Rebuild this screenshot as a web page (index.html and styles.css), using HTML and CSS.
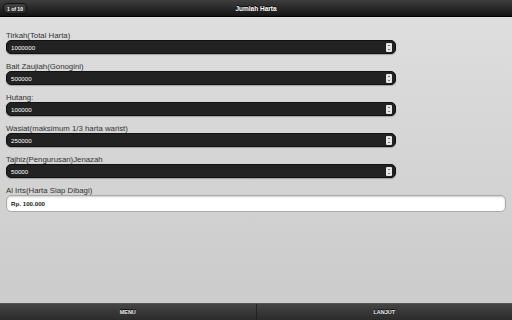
FILE: index.html
```html
<!DOCTYPE html>
<html lang="id">
<head>
  <meta charset="UTF-8" />
  <meta name="viewport" content="width=device-width, initial-scale=1.0"/>
  <title>Jumlah Harta</title>
  <link rel="stylesheet" href="styles.css">
</head>
<body>
  <div class="page">
    <header class="header">
      <span class="page-btn">1 of 10</span>
      <h1>Jumlah Harta</h1>
    </header>

    <main class="content">
      <div class="group">
        <label for="tirkah">Tirkah(Total Harta)</label>
        <div class="field">
          <input type="text" id="tirkah" value="1000000" />
          <span class="spin"></span>
        </div>
      </div>

      <div class="group">
        <label for="bait">Bait Zaujiah(Gonogini)</label>
        <div class="field">
          <input type="text" id="bait" value="500000" />
          <span class="spin"></span>
        </div>
      </div>

      <div class="group">
        <label for="hutang">Hutang:</label>
        <div class="field">
          <input type="text" id="hutang" value="100000" />
          <span class="spin"></span>
        </div>
      </div>

      <div class="group">
        <label for="wasiat">Wasiat(maksimum 1/3 harta warist)</label>
        <div class="field">
          <input type="text" id="wasiat" value="250000" />
          <span class="spin"></span>
        </div>
      </div>

      <div class="group">
        <label for="tajhiz">Tajhiz(Pengurusan)Jenazah</label>
        <div class="field">
          <input type="text" id="tajhiz" value="50000" />
          <span class="spin"></span>
        </div>
      </div>

      <div class="group">
        <label for="irts">Al Irts(Harta Siap Dibagi)</label>
        <input type="text" id="irts" class="result" value="Rp. 100.000" readonly />
      </div>
    </main>

    <footer class="footer">
      <a class="tab">MENU</a>
      <a class="tab">LANJUT</a>
    </footer>
  </div>
</body>
</html>
```

FILE: styles.css
```css
html, body {
  margin: 0;
  padding: 0;
  height: 100%;
}
body {
  font-family: "Liberation Sans", Arial, sans-serif;
  background: linear-gradient(#dfdfdf, #cacaca);
  color: #333;
}
.page {
  display: flex;
  flex-direction: column;
  height: 320px;
}
.header {
  height: 17px;
  box-sizing: border-box;
  background: linear-gradient(#3e3e3e, #141414);
  border-bottom: 1px solid #000;
  display: flex;
  align-items: center;
  justify-content: center;
  position: relative;
}
.header h1 {
  margin: 0;
  font-size: 6.5px;
  font-weight: bold;
  color: #fff;
  text-shadow: 0 -1px 0 #000;
}
.page-btn {
  position: absolute;
  left: 3px;
  top: 3px;
  height: 11px;
  width: 24px;
  box-sizing: border-box;
  border: 1px solid #111;
  border-radius: 4px;
  background: linear-gradient(#444, #2a2a2a);
  color: #fff;
  font-size: 5px;
  font-weight: bold;
  display: flex;
  align-items: center;
  justify-content: center;
}
.content {
  flex: 1;
  padding: 14px 6px 0;
}
.group {
  margin-bottom: 8px;
}
label {
  display: block;
  font-size: 7.8px;
  line-height: 9px;
  color: #333;
}
.field {
  width: 390px;
  height: 14px;
  box-sizing: border-box;
  background: #222;
  border: 1px solid #111;
  border-radius: 5px;
  box-shadow: 0 1px 1px rgba(0, 0, 0, 0.25);
  display: flex;
  align-items: center;
  padding: 0 3px 0 4px;
}
.field input {
  flex: 1;
  min-width: 0;
  border: none;
  outline: none;
  background: transparent;
  color: #fff;
  font-family: inherit;
  font-size: 6.2px;
  padding: 0;
}
.spin {
  width: 6px;
  height: 9px;
  background:
    linear-gradient(#777, #777) 2px 2px / 2px 1px no-repeat,
    linear-gradient(#777, #777) 2px 6px / 2px 1px no-repeat,
    #e6e6e6;
  border-radius: 1px;
}
.result {
  display: block;
  width: 500px;
  height: 17px;
  box-sizing: border-box;
  border: 1px solid #aaa;
  border-radius: 5px;
  background: #fff;
  box-shadow: inset 0 1px 2px rgba(0, 0, 0, 0.2);
  padding: 0 4px;
  font-family: inherit;
  font-size: 6.2px;
  font-weight: bold;
  color: #222;
  outline: none;
}
.footer {
  height: 16px;
  display: flex;
  background: linear-gradient(#444, #2b2b2b);
  border-top: 1px solid #555;
}
.tab {
  flex: 1;
  display: flex;
  align-items: center;
  justify-content: center;
  font-size: 5.5px;
  font-weight: bold;
  color: #eee;
  text-shadow: 0 -1px 0 #000;
  border-left: 1px solid #222;
}
.tab:first-child {
  border-left: none;
}
```
